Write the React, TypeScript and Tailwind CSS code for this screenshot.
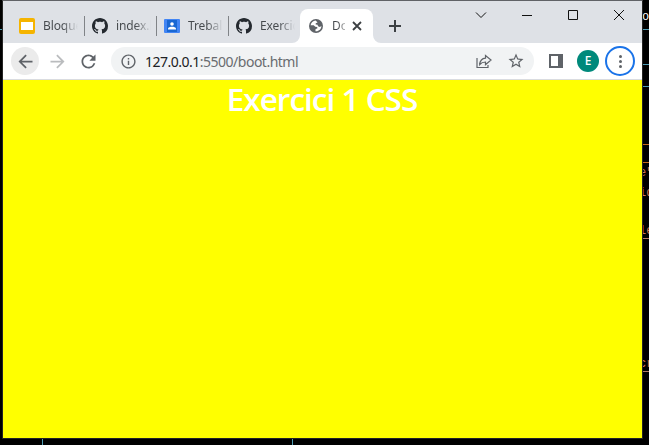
import React from "react";
import { MdArrowBack, MdArrowForward, MdRefresh, MdInfoOutline, MdStarBorder } from "react-icons/md";

function GithubIcon() {
  return (
    <svg width="16" height="16" viewBox="0 0 16 16" fill="#24292f">
      <path d="M8 0C3.58 0 0 3.58 0 8c0 3.54 2.29 6.53 5.47 7.59.4.07.55-.17.55-.38 0-.19-.01-.82-.01-1.49-2.01.37-2.53-.49-2.69-.94-.09-.23-.48-.94-.82-1.13-.28-.15-.68-.52-.01-.53.63-.01 1.08.58 1.23.82.72 1.21 1.87.87 2.33.66.07-.52.28-.87.51-1.07-1.78-.2-3.64-.89-3.64-3.95 0-.87.31-1.59.82-2.15-.08-.2-.36-1.02.08-2.12 0 0 .67-.21 2.2.82.64-.18 1.32-.27 2-.27s1.36.09 2 .27c1.53-1.04 2.2-.82 2.2-.82.44 1.1.16 1.92.08 2.12.51.56.82 1.27.82 2.15 0 3.07-1.87 3.75-3.65 3.95.29.25.54.73.54 1.48 0 1.07-.01 1.93-.01 2.2 0 .21.15.46.55.38A8.01 8.01 0 0 0 16 8c0-4.42-3.58-8-8-8z" />
    </svg>
  );
}

function GlobeIcon() {
  return (
    <svg width="14" height="14" viewBox="0 0 14 14" className="shrink-0">
      <circle cx="7" cy="7" r="7" fill="#5f6368" />
      <path d="M6.6 1.5C4 1.6 2 3.6 1.6 6.2h3.1l1.6 1.5 2 .2v1.7l-1.7.4-.2 2.3c3.3.4 6-2.1 6-5.2l-1.5.9-1.9-.7-.4-1.5-1.9-.3V4.2l1.9-.7z" fill="#fff" />
    </svg>
  );
}

function SlidesIcon() {
  return (
    <span className="flex h-4 w-4 items-center justify-center rounded-[2px] bg-[#f5b400]">
      <span className="h-2 w-3 bg-white" />
    </span>
  );
}

function ClassroomIcon() {
  return (
    <svg width="16" height="14" viewBox="0 0 16 14">
      <rect width="16" height="14" rx="1" fill="#4285f4" />
      <rect x="3" y="1" width="10" height="12" fill="#1967d2" />
      <circle cx="8" cy="5" r="1.8" fill="#fff" />
      <path d="M4 10.5V9.7C4 8.3 6.3 7.7 8 7.7s4 .6 4 2v.8z" fill="#fff" />
    </svg>
  );
}

function Tab({ icon, label, edge }: { icon: React.ReactNode; label: string; edge?: "first" | "last" }) {
  return (
    <div className={`flex h-[34px] shrink-0 items-center pl-[7px] ${edge === "first" ? "w-[73px]" : edge === "last" ? "w-[71px]" : "w-[72px]"}`}>
      <span className="flex w-4 shrink-0 justify-center">{icon}</span>
      <span className="ml-2 w-[35px] shrink-0 overflow-hidden whitespace-nowrap bg-gradient-to-r from-[#45494d] from-55% to-transparent bg-clip-text text-[12px] tracking-[-0.1px] text-transparent">
        {label}
      </span>
      {edge !== "last" && <span className={`h-5 w-px shrink-0 bg-[#808387] ${edge === "first" ? "ml-[6px]" : "ml-[5px]"}`} />}
    </div>
  );
}

function CaptionButtons() {
  return (
    <div className="ml-auto flex h-7 text-[#111]">
      <svg width="46" height="28" viewBox="0 0 46 28" fill="none" stroke="currentColor"><path d="m18 11.5 5 5 5-5" /></svg>
      <svg width="46" height="28" viewBox="0 0 46 28" fill="none" stroke="currentColor"><path d="M18 14.5h10" /></svg>
      <svg width="46" height="28" viewBox="0 0 46 28" fill="none" stroke="currentColor"><path d="M18.5 9.5h9v9h-9z" /></svg>
      <svg width="46" height="28" viewBox="0 0 46 28" fill="none" stroke="currentColor"><path d="m18 9 10 10m0-10L18 19" /></svg>
    </div>
  );
}

function TabStrip() {
  return (
    <div className="flex h-[42px] bg-[#dee1e6] pl-[9px]">
      <div className="flex pt-2">
        <Tab icon={<SlidesIcon />} label="Bloque" edge="first" />
        <Tab icon={<GithubIcon />} label="index.h" />
        <Tab icon={<ClassroomIcon />} label="Treball" />
        <Tab icon={<GithubIcon />} label="Exercici" edge="last" />
        <div className="relative flex h-[34px] w-[73px] items-center rounded-t-lg bg-white pl-[9px]">
          <svg className="absolute -left-2 bottom-0" width="8" height="8"><path d="M8 0v8H0a8 8 0 0 0 8-8" fill="#fff" /></svg>
          <svg className="absolute -right-2 bottom-0" width="8" height="8"><path d="M0 0v8h8a8 8 0 0 1-8-8" fill="#fff" /></svg>
          <GlobeIcon />
          <span className="ml-[9px] w-[13px] shrink-0 overflow-hidden whitespace-nowrap bg-gradient-to-r from-[#45494d] from-40% to-[#bbb] bg-clip-text text-[12px] text-transparent">Do</span>
          <svg className="ml-[7px] shrink-0" width="10" height="10" viewBox="0 0 10 10" stroke="#3c4043" strokeWidth="1.8"><path d="m1 1 8 8m0-8L1 9" /></svg>
        </div>
        <svg className="ml-4 mt-[11px]" width="12" height="12" viewBox="0 0 12 12" stroke="#3c4043" strokeWidth="2"><path d="M6 0v12M0 6h12" /></svg>
      </div>
      <CaptionButtons />
    </div>
  );
}

function Toolbar() {
  return (
    <div className="flex h-[37px] items-center border-b border-[#dadce0] bg-white pl-2 text-[#5f6368]">
      <span className="flex h-7 w-7 items-center justify-center rounded-full bg-[#ebebeb]"><MdArrowBack size={21} /></span>
      <MdArrowForward size={21} className="ml-[8px] text-[#babcbe]" />
      <MdRefresh size={21} className="ml-[10px]" />
      <div className="ml-[12px] flex h-7 w-[423px] items-center rounded-full bg-[#f1f3f4] pl-[9px] pr-[9px]">
        <MdInfoOutline size={17} />
        <span className="ml-[8px] whitespace-nowrap text-[14px] tracking-[-0.5px] text-[#696c70]"><span className="text-[#202124]">127.0.0.1</span>:5500/boot.html</span>
        <svg className="ml-auto" width="16" height="15" viewBox="0 0 16 15" fill="none" stroke="currentColor" strokeWidth="1.2">
          <path d="M1 4v9.5h11V11M9.5 1.5v2.7C6 4.5 4 7 3.7 10.5 5.5 8.4 7 8 9.5 8v2.6L15 6z" />
        </svg>
        <MdStarBorder size={18} className="ml-[15px]" />
      </div>
      <svg className="ml-[15px]" width="14" height="14"><path d="M0 0h14v14H0zM2 2v10h7V2z" fill="currentColor" fillRule="evenodd" /></svg>
      <span className="ml-[14px] flex h-[22px] w-[22px] items-center justify-center rounded-full bg-[#00897b] text-[12px] font-medium leading-none text-white">E</span>
      <span className="ml-[6px] flex h-[30px] w-[30px] flex-col items-center justify-center gap-[2px] rounded-full border-2 border-[#1a73e8]">
        <i className="h-[3px] w-[3px] rounded-full bg-[#5f6368]" />
        <i className="h-[3px] w-[3px] rounded-full bg-[#5f6368]" />
        <i className="h-[3px] w-[3px] rounded-full bg-[#5f6368]" />
      </span>
    </div>
  );
}

/* Fragments of the code editor that show around the browser window. */
function EditorBackdrop() {
  return (
    <div className="absolute inset-0 font-['Liberation_Mono',monospace] text-[12px] leading-[14px] text-[#ce7757]">
      <i className="absolute left-0 top-[29px] h-px w-[3px] bg-[#4e9db5]" />
      <i className="absolute left-[642px] top-[29px] h-px w-[7px] bg-[#4e9db5]" />
      <i className="absolute left-[642px] top-[64px] h-px w-[7px] bg-[#4e9db5]" />
      <i className="absolute left-[642px] top-[86px] h-px w-[7px] bg-[#4e9db5]" />
      <i className="absolute left-[642px] top-[144px] h-px w-[7px] bg-[#c66a1c]" />
      <i className="absolute left-[642px] top-[162px] h-px w-[7px] bg-[#c66a1c]" />
      <i className="absolute left-[642px] top-[238px] h-px w-[7px] bg-[#b47c68]" />
      <i className="absolute left-[642px] top-[371px] h-px w-[7px] bg-[#b47c68]" />
      <i className="absolute left-[42px] top-[438px] h-[7px] w-px bg-[#4e9db5]" />
      <i className="absolute left-[292px] top-[438px] h-[7px] w-px bg-[#4e9db5]" />
      <span className="absolute left-[642px] top-[10px] text-white">o</span>
      <span className="absolute left-[639px] top-[166px]">e"</span>
      <span className="absolute left-[639px] top-[186px]">id</span>
      <span className="absolute left-[639px] top-[224px]">le</span>
      <span className="absolute left-[639px] top-[357px]">cr</span>
    </div>
  );
}

export default function App() {
  return (
    <div className="relative h-[445px] w-[649px] overflow-hidden bg-black font-['Noto_Sans','Open_Sans',sans-serif]">
      <EditorBackdrop />
      <div className="relative ml-[2px] flex h-[439px] w-[641px] flex-col border border-t-[#606266] border-b-[#242424] border-l-[#242424] border-r-[#242424] bg-[#ffff00]">
        <TabStrip />
        <Toolbar />
        <main className="flex-1 bg-[#ffff00] text-center">
          <h1 className="ml-[-1px] font-['Open_Sans',sans-serif] text-[31.5px] font-semibold leading-[38px] tracking-[-1px] text-white">Exercici 1 CSS</h1>
        </main>
      </div>
    </div>
  );
}
